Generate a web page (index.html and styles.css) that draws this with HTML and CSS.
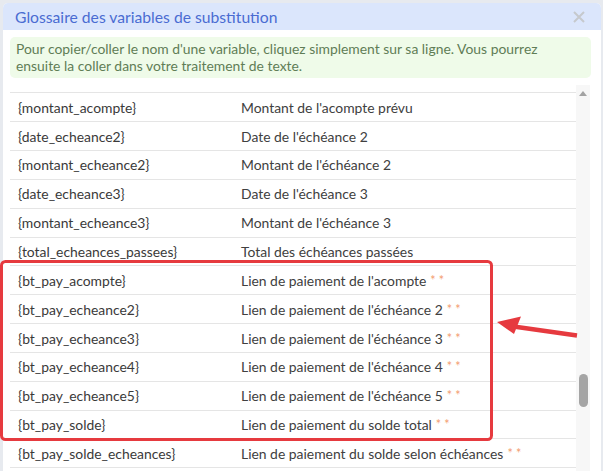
FILE: index.html
```html
<!DOCTYPE html>
<html lang="fr">
<head>
<meta charset="utf-8">
<title>Glossaire</title>
<link rel="stylesheet" href="styles.css">
</head>
<body>
<div class="dialog">
  <div class="titlebar">
    <span class="title">Glossaire des variables de substitution</span>
    <svg class="close" width="12" height="12" viewBox="0 0 12 12"><path d="M1 1L11 11M11 1L1 11" stroke="#c6c9cd" stroke-width="2" fill="none"/></svg>
  </div>
  <div class="body">
    <div class="alert">Pour copier/coller le nom d'une variable, cliquez simplement sur sa ligne. Vous pourrez ensuite la coller dans votre traitement de texte.</div>
    <div class="scroller">
      <div class="viewport">
        <div class="rows">
          <div class="row row-hidden"><span class="var">{date_acompte}</span><span class="desc">Date limite de paiement de l'acompte</span></div>
          <div class="row"><span class="var">{montant_acompte}</span><span class="desc">Montant de l'acompte prévu</span></div>
          <div class="row"><span class="var">{date_echeance2}</span><span class="desc">Date de l'échéance 2</span></div>
          <div class="row"><span class="var">{montant_echeance2}</span><span class="desc">Montant de l'échéance 2</span></div>
          <div class="row"><span class="var">{date_echeance3}</span><span class="desc">Date de l'échéance 3</span></div>
          <div class="row"><span class="var">{montant_echeance3}</span><span class="desc">Montant de l'échéance 3</span></div>
          <div class="row"><span class="var">{total_echeances_passees}</span><span class="desc">Total des échéances passées</span></div>
          <div class="row"><span class="var">{bt_pay_acompte}</span><span class="desc">Lien de paiement de l'acompte<span class="ast">* *</span></span></div>
          <div class="row"><span class="var">{bt_pay_echeance2}</span><span class="desc">Lien de paiement de l'échéance 2<span class="ast">* *</span></span></div>
          <div class="row"><span class="var">{bt_pay_echeance3}</span><span class="desc">Lien de paiement de l'échéance 3<span class="ast">* *</span></span></div>
          <div class="row"><span class="var">{bt_pay_echeance4}</span><span class="desc">Lien de paiement de l'échéance 4<span class="ast">* *</span></span></div>
          <div class="row"><span class="var">{bt_pay_echeance5}</span><span class="desc">Lien de paiement de l'échéance 5<span class="ast">* *</span></span></div>
          <div class="row"><span class="var">{bt_pay_solde}</span><span class="desc">Lien de paiement du solde total<span class="ast">* *</span></span></div>
          <div class="row"><span class="var">{bt_pay_solde_echeances}</span><span class="desc">Lien de paiement du solde selon échéances<span class="ast">* *</span></span></div>
          <div class="row"><span class="var">{lien_espace_client}</span><span class="desc">Lien vers l'espace client</span></div>
        </div>
      </div>
      <div class="track">
        <svg class="up" width="8" height="5" viewBox="0 0 8 5"><path d="M0 5L4 0L8 5Z" fill="#a3a3a3"/></svg>
        <div class="thumb"></div>
      </div>
    </div>
  </div>
</div>
<svg class="annot" width="603" height="471" viewBox="0 0 603 471">
  <rect x="1.5" y="261.5" width="490" height="178" rx="4" ry="4" fill="none" stroke="#e63a3f" stroke-width="3"/>
  <line x1="510" y1="326" x2="577" y2="335.5" stroke="#e63a3f" stroke-width="4.5"/>
  <polygon points="497,322 521,316.5 514,334" fill="#e63a3f"/>
</svg>
</body>
</html>
```
FILE: styles.css
```css
html, body {
  margin: 0;
  padding: 0;
}
body {
  width: 603px;
  height: 471px;
  overflow: hidden;
  background: #e7eaef;
  font-family: "Lato", "Open Sans", sans-serif;
  position: relative;
  box-sizing: border-box;
  padding: 3px 2px 0 3px;
}
.dialog {
  background: #ffffff;
  border-radius: 5px 5px 0 0;
  height: 468px;
  overflow: hidden;
  display: flex;
  flex-direction: column;
}
.titlebar {
  height: 27px;
  flex: none;
  background: #dbe6fc;
  display: flex;
  align-items: center;
  justify-content: space-between;
  padding: 0 16px 0 12px;
}
.title {
  color: #4a6cd2;
  font-size: 15.7px;
}
.close {
  display: block;
}
.body {
  flex: 1;
  display: flex;
  flex-direction: column;
  padding: 7px 10px 0 7px;
  min-height: 0;
}
.alert {
  background: #effbe9;
  color: #5f7d56;
  border-radius: 5px;
  font-size: 13.9px;
  line-height: 16.5px;
  padding: 4px 6px;
  flex: none;
}
.scroller {
  margin-top: 7px;
  flex: 1;
  min-height: 0;
  display: flex;
  margin-right: 1px;
}
.viewport {
  flex: 1;
  overflow: hidden;
}
.rows {
  margin-top: -20.5px;
}
.row {
  display: flex;
  height: 27.85px;
  align-items: center;
  border-bottom: 1px solid #e5e5e5;
  font-size: 13.9px;
  color: #3a3a3a;
}
.row-hidden {
  align-items: flex-start;
  padding-top: 3px;
  box-sizing: border-box;
  height: 28.85px;
}
.var {
  width: 223px;
  padding-left: 8px;
  flex: none;
}
.desc {
  color: #404040;
}
.ast {
  color: #f39b6e;
  font-size: 12.5px;
  margin-left: 4px;
  position: relative;
  top: -1px;
}
.track {
  width: 14px;
  flex: none;
  background: #f7f7f7;
  display: flex;
  flex-direction: column;
  align-items: center;
}
.up {
  display: block;
  margin-top: 6px;
}
.thumb {
  margin-top: 278px;
  width: 9px;
  height: 33px;
  border-radius: 5px;
  background: #a5a5a5;
}
.annot {
  position: absolute;
  left: 0;
  top: 0;
  pointer-events: none;
}
```
